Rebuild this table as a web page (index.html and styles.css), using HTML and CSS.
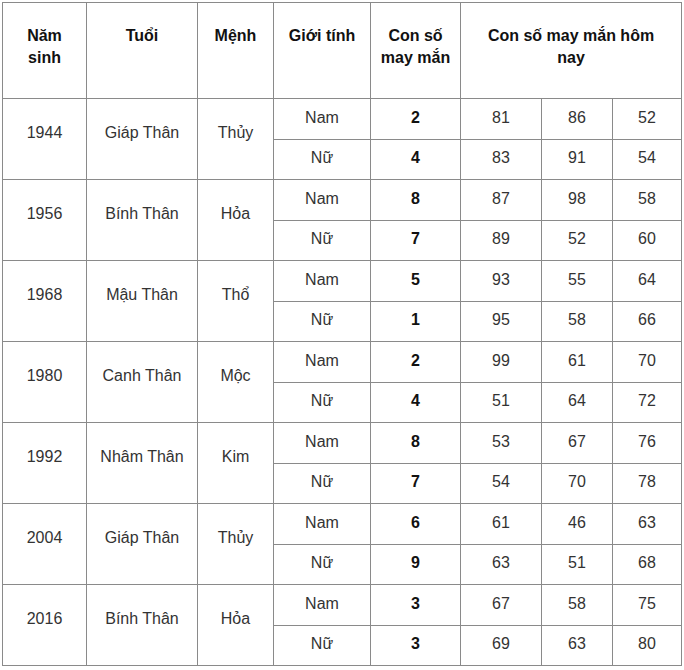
FILE: index.html
```html
<!DOCTYPE html>
<html lang="vi">
<head>
<meta charset="utf-8">
<title>Con số may mắn tuổi Thân</title>
<link rel="stylesheet" href="styles.css">
</head>
<body>
<table class="lucky">
  <colgroup>
    <col class="c1"><col class="c2"><col class="c3"><col class="c4"><col class="c5"><col class="c6"><col class="c7"><col class="c8">
  </colgroup>
  <thead>
    <tr class="head">
      <th>Năm sinh</th>
      <th>Tuổi</th>
      <th>Mệnh</th>
      <th>Giới tính</th>
      <th>Con số may mắn</th>
      <th colspan="3" class="wide">Con số may mắn hôm nay</th>
    </tr>
  </thead>
  <tbody>
    <tr><td rowspan="2" class="span">1944</td><td rowspan="2" class="span">Giáp Thân</td><td rowspan="2" class="span">Thủy</td><td>Nam</td><td class="num">2</td><td>81</td><td>86</td><td>52</td></tr>
    <tr><td>Nữ</td><td class="num">4</td><td>83</td><td>91</td><td>54</td></tr>
    <tr><td rowspan="2" class="span">1956</td><td rowspan="2" class="span">Bính Thân</td><td rowspan="2" class="span">Hỏa</td><td>Nam</td><td class="num">8</td><td>87</td><td>98</td><td>58</td></tr>
    <tr><td>Nữ</td><td class="num">7</td><td>89</td><td>52</td><td>60</td></tr>
    <tr><td rowspan="2" class="span">1968</td><td rowspan="2" class="span">Mậu Thân</td><td rowspan="2" class="span">Thổ</td><td>Nam</td><td class="num">5</td><td>93</td><td>55</td><td>64</td></tr>
    <tr><td>Nữ</td><td class="num">1</td><td>95</td><td>58</td><td>66</td></tr>
    <tr><td rowspan="2" class="span">1980</td><td rowspan="2" class="span">Canh Thân</td><td rowspan="2" class="span">Mộc</td><td>Nam</td><td class="num">2</td><td>99</td><td>61</td><td>70</td></tr>
    <tr><td>Nữ</td><td class="num">4</td><td>51</td><td>64</td><td>72</td></tr>
    <tr><td rowspan="2" class="span">1992</td><td rowspan="2" class="span">Nhâm Thân</td><td rowspan="2" class="span">Kim</td><td>Nam</td><td class="num">8</td><td>53</td><td>67</td><td>76</td></tr>
    <tr><td>Nữ</td><td class="num">7</td><td>54</td><td>70</td><td>78</td></tr>
    <tr><td rowspan="2" class="span">2004</td><td rowspan="2" class="span">Giáp Thân</td><td rowspan="2" class="span">Thủy</td><td>Nam</td><td class="num">6</td><td>61</td><td>46</td><td>63</td></tr>
    <tr><td>Nữ</td><td class="num">9</td><td>63</td><td>51</td><td>68</td></tr>
    <tr><td rowspan="2" class="span">2016</td><td rowspan="2" class="span">Bính Thân</td><td rowspan="2" class="span">Hỏa</td><td>Nam</td><td class="num">3</td><td>67</td><td>58</td><td>75</td></tr>
    <tr><td>Nữ</td><td class="num">3</td><td>69</td><td>63</td><td>80</td></tr>
  </tbody>
</table>
</body>
</html>
```
FILE: styles.css
```css
html, body {
  margin: 0;
  padding: 0;
  background: #ffffff;
}
body {
  padding: 2px;
  font-family: "Liberation Sans", Arial, sans-serif;
  font-size: 16px;
  color: #333333;
}
.lucky {
  border-collapse: collapse;
  table-layout: fixed;
  width: 679px;
}
.c1 { width: 84px; }
.c2 { width: 111px; }
.c3 { width: 76px; }
.c4 { width: 97px; }
.c5 { width: 90px; }
.c6 { width: 81px; }
.c7 { width: 71px; }
.c8 { width: 69px; }
.lucky th,
.lucky td {
  border: 1px solid #8a8a8a;
  text-align: center;
  line-height: 22px;
}
.lucky th {
  vertical-align: top;
  padding: 22px 8px 0;
  font-weight: bold;
  color: #111111;
  height: 73px;
}
.lucky th.wide {
  padding-left: 14px;
  padding-right: 14px;
}
.lucky td {
  vertical-align: middle;
  padding: 0 8px 2px;
  height: 37.5px;
}
.lucky td.span {
  padding-bottom: 12px;
}
.lucky td.num {
  font-weight: bold;
  color: #111111;
}
```
